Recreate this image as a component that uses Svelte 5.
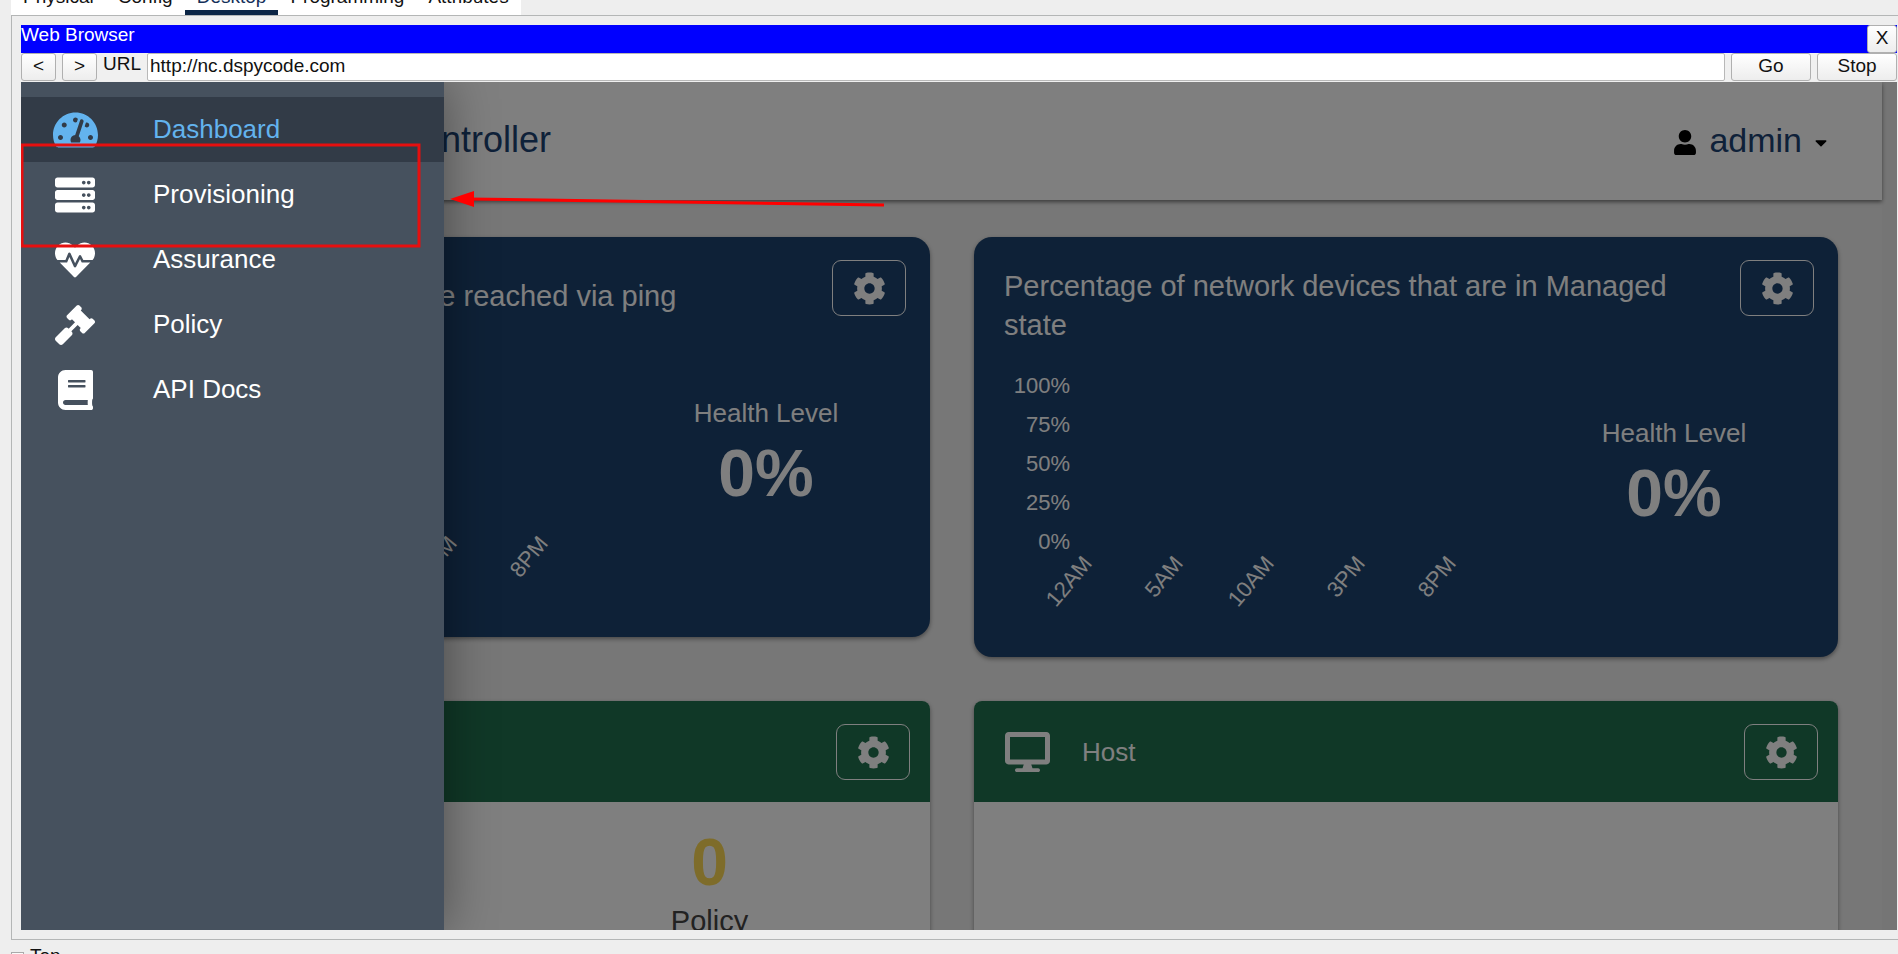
<script>
  const tabs = ['Physical', 'Config', 'Desktop', 'Programming', 'Attributes']
  const activeTab = 'Desktop'

  let url = 'http://nc.dspycode.com'

  const icons = {
    gauge: { box: '0 0 576 512', w: 45, d: 'M288 32C128.94 32 0 160.94 0 320c0 52.8 14.25 102.26 39.06 144.8 5.61 9.62 16.3 15.2 27.44 15.2h443c11.14 0 21.83-5.58 27.44-15.2C561.75 422.26 576 372.8 576 320c0-159.06-128.94-288-288-288zm0 64c14.71 0 26.58 10.13 30.32 23.65-1.11 2.26-2.64 4.23-3.45 6.67l-9.22 27.67c-5.13 3.49-10.97 6.01-17.64 6.01-17.67 0-32-14.33-32-32S270.33 96 288 96zM96 384c-17.67 0-32-14.33-32-32s14.33-32 32-32 32 14.33 32 32-14.33 32-32 32zm48-160c-17.67 0-32-14.33-32-32s14.33-32 32-32 32 14.33 32 32-14.33 32-32 32zm246.77-72.41l-61.33 184C343.13 347.33 352 364.54 352 384c0 11.72-3.38 22.55-8.88 32H232.88c-5.5-9.45-8.88-20.28-8.88-32 0-33.94 26.5-61.43 59.9-63.59l61.34-184.01c4.17-12.56 17.73-19.45 30.36-15.17 12.57 4.19 19.35 17.79 15.17 30.36zm14.66 57.2l15.52-46.55c3.47-1.29 7.13-2.23 11.05-2.23 17.67 0 32 14.33 32 32s-14.33 32-32 32c-11.38-.01-20.89-6.28-26.57-15.22zM480 384c-17.67 0-32-14.33-32-32s14.33-32 32-32 32 14.33 32 32-14.33 32-32 32z' },
    server: { box: '0 0 512 512', w: 40, d: 'M480 160H32c-17.673 0-32-14.327-32-32V64c0-17.673 14.327-32 32-32h448c17.673 0 32 14.327 32 32v64c0 17.673-14.327 32-32 32zm-48-88c-13.255 0-24 10.745-24 24s10.745 24 24 24 24-10.745 24-24-10.745-24-24-24zm-64 0c-13.255 0-24 10.745-24 24s10.745 24 24 24 24-10.745 24-24-10.745-24-24-24zm112 248H32c-17.673 0-32-14.327-32-32v-64c0-17.673 14.327-32 32-32h448c17.673 0 32 14.327 32 32v64c0 17.673-14.327 32-32 32zm-48-88c-13.255 0-24 10.745-24 24s10.745 24 24 24 24-10.745 24-24-10.745-24-24-24zm-64 0c-13.255 0-24 10.745-24 24s10.745 24 24 24 24-10.745 24-24-10.745-24-24-24zm112 248H32c-17.673 0-32-14.327-32-32v-64c0-17.673 14.327-32 32-32h448c17.673 0 32 14.327 32 32v64c0 17.673-14.327 32-32 32zm-48-88c-13.255 0-24 10.745-24 24s10.745 24 24 24 24-10.745 24-24-10.745-24-24-24zm-64 0c-13.255 0-24 10.745-24 24s10.745 24 24 24 24-10.745 24-24-10.745-24-24-24z' },
    heart: { box: '0 0 512 512', w: 40, d: 'M320.2 243.8l-49.7 99.4c-6 12.1-23.4 11.7-28.9-.6l-56.9-126.3-30 71.7H60.6l182.5 186.5c7.1 7.3 18.6 7.3 25.7 0L451.4 288H342.3l-22.1-44.2zM473.7 73.9l-2.4-2.5c-51.5-52.6-135.8-52.6-187.4 0L256 100l-27.9-28.5c-51.5-52.7-135.9-52.7-187.4 0l-2.4 2.4C-10.4 123.7-12.5 203 31 256h102.4l35.9-86.2c5.4-12.9 23.6-13.1 29.4-.4l58.2 129.3 49-97.9c5.9-11.8 22.7-11.8 28.6 0l27.6 55.2H481c43.5-53 41.4-132.3-7.3-182.1z' },
    gavel: { box: '0 0 512 512', w: 40, d: 'M504.971 199.362l-22.627-22.627c-9.373-9.373-24.569-9.373-33.941 0l-5.657 5.657L329.608 69.255l5.657-5.657c9.373-9.373 9.373-24.569 0-33.941L312.638 7.029c-9.373-9.373-24.569-9.373-33.941 0L154.246 131.48c-9.373 9.373-9.373 24.569 0 33.941l22.627 22.627c9.373 9.373 24.569 9.373 33.941 0l5.657-5.657 39.598 39.598-81.04 81.04-5.657-5.657c-12.497-12.497-32.758-12.497-45.255 0L9.373 412.118c-12.497 12.497-12.497 32.758 0 45.255l45.255 45.255c12.497 12.497 32.758 12.497 45.255 0l114.745-114.745c12.497-12.497 12.497-32.758 0-45.255l-5.657-5.657 81.04-81.04 39.598 39.598-5.657 5.657c-9.373 9.373-9.373 24.569 0 33.941l22.627 22.627c9.373 9.373 24.569 9.373 33.941 0l124.451-124.451c9.372-9.372 9.372-24.568 0-33.941z' },
    book: { box: '0 0 448 512', w: 35, d: 'M448 360V24c0-13.3-10.7-24-24-24H96C43 0 0 43 0 96v320c0 53 43 96 96 96h328c13.3 0 24-10.7 24-24v-16c0-7.5-3.5-14.3-8.9-18.7-4.2-15.4-4.2-59.3 0-74.7 5.4-4.3 8.9-11.1 8.9-18.6zM128 134c0-3.3 2.7-6 6-6h212c3.3 0 6 2.7 6 6v20c0 3.3-2.7 6-6 6H134c-3.3 0-6-2.7-6-6v-20zm0 64c0-3.3 2.7-6 6-6h212c3.3 0 6 2.7 6 6v20c0 3.3-2.7 6-6 6H134c-3.3 0-6-2.7-6-6v-20zm253.4 250H96c-17.7 0-32-14.3-32-32 0-17.6 14.4-32 32-32h285.4c-1.9 17.1-1.9 46.9 0 64z' },
  }

  const menu = [
    { label: 'Dashboard', icon: icons.gauge, active: true },
    { label: 'Provisioning', icon: icons.server },
    { label: 'Assurance', icon: icons.heart },
    { label: 'Policy', icon: icons.gavel },
    { label: 'API Docs', icon: icons.book },
  ]

  const healthCards = [
    { title: 'network devices that can be reached via ping', value: '0%' },
    { title: 'Percentage of network devices that are in Managed state', value: '0%' },
  ]

  const levels = ['100%', '75%', '50%', '25%', '0%']
  const hours = ['12AM', '5AM', '10AM', '3PM', '8PM']
</script>

{#snippet cog(label)}
  <button class="cog" type="button" aria-label={label}>
    <svg viewBox="0 0 512 512" width="33" height="33" aria-hidden="true">
      <path d="M487.4 315.7l-42.6-24.6c4.3-23.2 4.3-47 0-70.2l42.6-24.6c4.9-2.8 7.1-8.6 5.5-14-11.1-35.6-30-67.8-54.7-94.6-3.8-4.1-10-5.1-14.8-2.3L380.8 110c-17.9-15.4-38.5-27.3-60.8-35.1V25.8c0-5.6-3.9-10.5-9.4-11.7-36.7-8.2-74.3-7.8-109.2 0-5.5 1.2-9.4 6.1-9.4 11.7V75c-22.2 7.9-42.8 19.8-60.8 35.1L88.7 85.5c-4.9-2.8-11-1.9-14.8 2.3-24.7 26.7-43.6 58.9-54.7 94.6-1.7 5.4.6 11.2 5.5 14L67.3 221c-4.3 23.2-4.3 47 0 70.2l-42.6 24.6c-4.9 2.8-7.1 8.6-5.5 14 11.1 35.6 30 67.8 54.7 94.6 3.8 4.1 10 5.1 14.8 2.3l42.6-24.6c17.9 15.4 38.5 27.3 60.8 35.1v49.2c0 5.6 3.9 10.5 9.4 11.7 36.7 8.2 74.3 7.8 109.2 0 5.5-1.2 9.4-6.1 9.4-11.7v-49.2c22.2-7.9 42.8-19.8 60.8-35.1l42.6 24.6c4.9 2.8 11 1.9 14.8-2.3 24.7-26.7 43.6-58.9 54.7-94.6 1.5-5.5-.7-11.3-5.6-14.1zM256 336c-44.1 0-80-35.9-80-80s35.9-80 80-80 80 35.9 80 80-35.9 80-80 80z" />
    </svg>
  </button>
{/snippet}

<div class="window">
  <nav class="tabs">
    {#each tabs as tab}
      <a class="tab" class:active={tab === activeTab} href="#{tab.toLowerCase()}">{tab}</a>
    {/each}
  </nav>

  <section class="panel">
    <div class="titlebar">
      <span>Web Browser</span>
      <button class="btn close" type="button">X</button>
    </div>
    <form class="address">
      <button class="btn step" type="button">&lt;</button>
      <button class="btn step" type="button">&gt;</button>
      <label for="url">URL</label>
      <input id="url" type="text" bind:value={url} />
      <button class="btn action" type="button">Go</button>
      <button class="btn action" type="button">Stop</button>
    </form>

    <div class="viewport">
      <main class="page">
        <header class="topbar">
          <h1>Network Controller</h1>
          <button class="user" type="button">
            <svg viewBox="0 0 448 512" width="22" height="25" aria-hidden="true">
              <path d="M224 256c70.7 0 128-57.3 128-128S294.7 0 224 0 96 57.3 96 128s57.3 128 128 128zm89.6 32h-16.7c-22.2 10.2-46.9 16-72.9 16s-50.6-5.8-72.9-16h-16.7C60.2 288 0 348.2 0 422.4V464c0 26.5 21.5 48 48 48h352c26.5 0 48-21.5 48-48v-41.6c0-74.2-60.2-134.4-134.4-134.4z" />
            </svg>
            <span>admin</span>
            <svg viewBox="0 0 320 512" width="12" height="19" aria-hidden="true">
              <path d="M31.3 192h257.3c17.8 0 26.7 21.5 14.1 34.1L174.1 354.8c-7.8 7.8-20.5 7.8-28.3 0L17.2 226.1C4.6 213.5 13.5 192 31.3 192z" />
            </svg>
          </button>
        </header>

        <div class="cards">
          {#each healthCards as card}
            <article class="card health">
              <header>
                <h2>{card.title}</h2>
                {@render cog('Card settings')}
              </header>
              <div class="body">
                <svg class="chart" width="484" height="252">
                  {#each levels as level, i}
                    <text x="66" y={18 + i * 39} text-anchor="end">{level}</text>
                  {/each}
                  {#each hours as hour, i}
                    <text transform="translate({89 + i * 91} 189) rotate(-50)" text-anchor="end">{hour}</text>
                  {/each}
                </svg>
                <div class="stat">
                  <span class="name">Health Level</span>
                  <strong>{card.value}</strong>
                </div>
              </div>
            </article>
          {/each}

          <article class="card counts">
            <header>
              {@render cog('Issue settings')}
            </header>
            <div class="body">
              <div class="stat">
                <strong>0</strong>
                <span class="name">Policy</span>
              </div>
            </div>
          </article>

          <article class="card counts">
            <header>
              <svg viewBox="0 0 576 512" width="45" height="40" aria-hidden="true">
                <path d="M528 0H48C21.5 0 0 21.5 0 48v320c0 26.5 21.5 48 48 48h192l-16 48h-72c-13.3 0-24 10.7-24 24s10.7 24 24 24h272c13.3 0 24-10.7 24-24s-10.7-24-24-24h-72l-16-48h192c26.5 0 48-21.5 48-48V48c0-26.5-21.5-48-48-48zm-16 352H64V64h448v288z" />
              </svg>
              <h2>Host</h2>
              {@render cog('Host settings')}
            </header>
            <div class="body"></div>
          </article>
        </div>
      </main>

      <div class="backdrop"></div>

      <nav class="drawer">
        {#each menu as item}
          <a class="item" class:active={item.active} href="#{item.label.toLowerCase().replace(' ', '-')}">
            <span class="icon">
              <svg viewBox={item.icon.box} width={item.icon.w} height="40" aria-hidden="true"><path d={item.icon.d} /></svg>
            </span>
            {item.label}
          </a>
        {/each}
      </nav>

      <!-- callout on the Provisioning entry -->
      <svg class="callout" width="866" height="170" aria-hidden="true">
        <rect x="1" y="63" width="397" height="101" fill="none" stroke="#e60f0f" stroke-width="3" />
        <path d="M448 117L863 123" stroke="#f00" stroke-width="3" />
        <path d="M429 117l24-8v16z" fill="#f00" />
      </svg>
    </div>
  </section>

  <footer class="bottom">
    <input id="top" type="checkbox" />
    <label for="top">Top</label>
  </footer>
</div>

<style>
  :global(body) { margin: 0; background: #eee; }
  * { box-sizing: border-box; }
  button, input { font: inherit; color: inherit; margin: 0; }
  h1, h2 { margin: 0; font-weight: 400; }
  svg { fill: currentColor; flex: none; }

  .window { display: flex; flex-direction: column; height: 100vh; overflow: hidden; background: #eee; color: #111; font: 19px/22px "Liberation Sans", Arial, sans-serif; }

  .tabs { flex: none; display: flex; align-items: flex-end; align-self: flex-start; height: 15px; margin-left: 11px; background: #fff; }
  .tab { padding: 0 12px 2px; border-bottom: 5px solid transparent; color: #111; text-decoration: none; }
  .tab.active { color: #14305a; border-bottom-color: #0b2545; }

  .panel { flex: 1; min-height: 0; display: flex; flex-direction: column; margin-left: 11px; padding: 9px 1px 9px 9px; border: 1px solid #b4b6b6; border-right: 0; }
  .titlebar { flex: none; display: flex; justify-content: space-between; height: 28px; background: #00f; color: #fff; line-height: 20px; }
  .btn { padding: 0 0 2px; border: 1px solid #b0b0b0; border-radius: 3px; background: linear-gradient(#fff, #ededed); color: #111; line-height: 22px; }
  .close { width: 30px; }
  .address { flex: none; display: flex; height: 29px; gap: 6px; padding-bottom: 1px; background: #f0f0f0; }
  .step { width: 35px; }
  .action { width: 80px; }
  .address input { flex: 1; min-width: 0; padding: 0 2px 3px; border: 1px solid #b8b8b8; border-radius: 2px; background: #fff; }

  .viewport { position: relative; flex: 1; min-height: 0; overflow: hidden; background: #ebebeb; }
  .page { height: 100%; margin-right: 15px; background: #eee; }
  .topbar { display: flex; align-items: center; justify-content: space-between; height: 118px; padding: 0 55px 2px 232px; background: #fff; box-shadow: 0 2px 4px rgba(0, 0, 0, 0.5); color: #1c4272; }
  h1 { font-size: 36px; line-height: 40px; }
  .user { display: flex; align-items: center; gap: 13px; padding: 0; border: 0; background: none; font-size: 34px; line-height: 40px; }
  .user svg { color: #000; margin-top: 4px; }

  .cards { display: grid; grid-template-columns: 1fr 1fr; align-items: start; gap: 44px; padding: 37px 44px 44px 45px; }
  .card { overflow: hidden; box-shadow: 0 2px 4px rgba(0, 0, 0, 0.4); }
  .card header { display: flex; color: #fff; }
  .cog { flex: none; display: flex; align-items: center; justify-content: center; width: 74px; height: 56px; margin-left: auto; padding: 0; border: 1px solid #fff; border-radius: 9px; background: none; }
  .stat { display: flex; flex-direction: column; align-items: center; }
  .stat strong { font-size: 66px; line-height: 80px; }

  .health { border-radius: 18px; background: #1c426e; color: #fff; }
  .health header { gap: 30px; padding: 0 24px 0 30px; min-height: 118px; align-items: flex-start; }
  .health h2 { align-self: center; padding: 30px 0; font-size: 29px; line-height: 39px; }
  .health .cog { margin-top: 23px; }
  .health .body { display: grid; grid-template-columns: 2fr 1fr; padding: 0 30px 30px; }
  .health .stat { padding-top: 39px; }
  .health .name { font-size: 26px; line-height: 39px; }
  .chart text { font-size: 22px; }

  .counts { border-radius: 8px; background: #fff; }
  .counts header { align-items: center; gap: 32px; padding: 23px 20px 22px 31px; background: #20704e; }
  .counts h2 { font-size: 26px; line-height: 39px; }
  .counts .body { display: grid; grid-template-columns: 1fr 1fr; min-height: 220px; padding: 20px 6px 0 0; }
  .counts .stat { grid-column: 2; }
  .counts strong { color: #fcd954; }
  .counts .name { color: #444; font-size: 29px; line-height: 39px; }

  .backdrop { position: absolute; inset: 0; background: rgba(0, 0, 0, 0.5); }
  .drawer { position: absolute; top: 0; bottom: 0; left: 0; width: 423px; padding-top: 15px; background: #46515e; box-shadow: 0 0 48px rgba(0, 0, 0, 0.4); }
  .item { display: flex; align-items: center; height: 65px; color: #fff; font-size: 26px; line-height: 39px; text-decoration: none; }
  .item.active { background: #323b47; color: #63b3ee; }
  .icon { display: flex; justify-content: center; width: 108px; margin-right: 24px; }

  .callout { position: absolute; top: 0; left: 0; pointer-events: none; }

  .bottom { flex: none; display: flex; gap: 6px; height: 14px; padding: 5px 0 0 11px; }
  .bottom input { appearance: none; flex: none; width: 13px; height: 13px; margin-top: 7px; border: 1px solid #aaa; background: #fafafa; }
</style>
